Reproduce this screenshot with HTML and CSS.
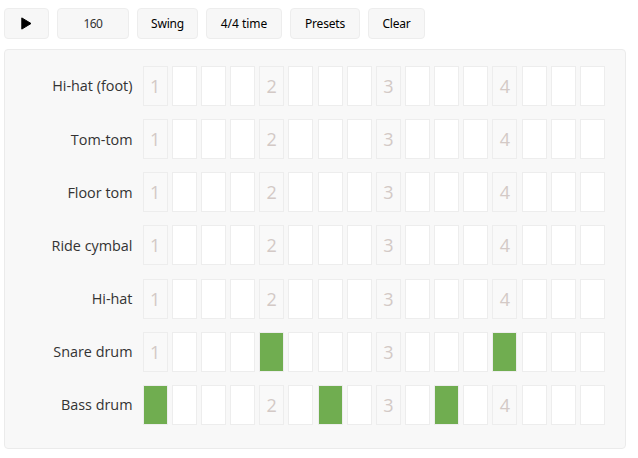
FILE: index.html
```html
<!DOCTYPE html>
<html lang="en">
<head>
<meta charset="utf-8">
<title>Drum machine</title>
<link rel="stylesheet" href="styles.css">
</head>
<body>
<div class="toolbar">
<button class="btn play" aria-label="Play"><svg width="11" height="13" viewBox="0 0 11 13"><path d="M.8.9v11.2L10 6.5z" stroke="#000" stroke-width="1" stroke-linejoin="round"/></svg></button>
<div class="btn tempo"><span>160</span></div>
<button class="btn swing"><span>Swing</span></button>
<button class="btn time"><span>4/4 time</span></button>
<button class="btn presets"><span>Presets</span></button>
<button class="btn clear"><span>Clear</span></button>
</div>
<main class="panel" id="panel"></main>
<script src="app.js"></script>
</body>
</html>
```
FILE: styles.css
```css
* { box-sizing: border-box; }
body {
  margin: 0;
  padding: 8px 12px 0 4px;
  background: #fff;
  color: #333;
  font-family: "Open Sans", "Noto Sans", sans-serif;
}
.toolbar { display: flex; gap: 8px; height: 31px; }
.btn {
  display: flex;
  align-items: center;
  justify-content: center;
  height: 31px;
  padding: 0;
  border: 1px solid #ededed;
  border-radius: 4px;
  background: #f7f7f7;
  color: #000;
  font: 400 12px "Noto Sans", sans-serif;
  white-space: nowrap;
}
.play { width: 45px; }
.tempo { width: 72px; color: #333; letter-spacing: -0.6px; }
.swing { width: 61px; letter-spacing: -0.2px; }
.time { width: 76px; letter-spacing: 0; }
.presets { width: 70px; letter-spacing: -0.2px; }
.clear { width: 57px; letter-spacing: -0.2px; }
.panel {
  display: flex;
  flex-direction: column;
  gap: 13.18px;
  width: 622px;
  height: 400px;
  margin-top: 10px;
  padding: 15.85px 0 0;
  border: 1px solid #ebebeb;
  border-radius: 4px;
  background: #f8f8f8;
}
.row { display: flex; height: 40px; flex: none; }
.label {
  width: 127.5px;
  margin-right: 10.1px;
  padding-top: 0.6px;
  font-size: 14.4px;
  line-height: 39px;
  text-align: right;
  white-space: nowrap;
}
.steps { display: flex; gap: 4.16px; }
.step {
  width: 25px;
  height: 40px;
  border: 1px solid #ededed;
  background: #fff;
  color: #d3c9c6;
  font-size: 18px;
  line-height: 38px;
  text-align: center;
}
.beat { background: #f9f9f9; }
.on { background: #70ad50; }
```
FILE: app.js
```js
const tracks = [
  ["Hi-hat (foot)", []],
  ["Tom-tom", []],
  ["Floor tom", []],
  ["Ride cymbal", []],
  ["Hi-hat", []],
  ["Snare drum", [4, 12]],
  ["Bass drum", [0, 6, 10]]
];
const panel = document.getElementById("panel");
for (const [name, hits] of tracks) {
  const row = document.createElement("div");
  row.className = "row";
  const label = document.createElement("div");
  label.className = "label";
  label.textContent = name;
  const steps = document.createElement("div");
  steps.className = "steps";
  for (let i = 0; i < 16; i++) {
    const step = document.createElement("div");
    step.className = "step";
    if (hits.includes(i)) {
      step.classList.add("on");
    } else if (i % 4 === 0) {
      step.classList.add("beat");
      step.textContent = i / 4 + 1;
    }
    steps.append(step);
  }
  row.append(label, steps);
  panel.append(row);
}
```
